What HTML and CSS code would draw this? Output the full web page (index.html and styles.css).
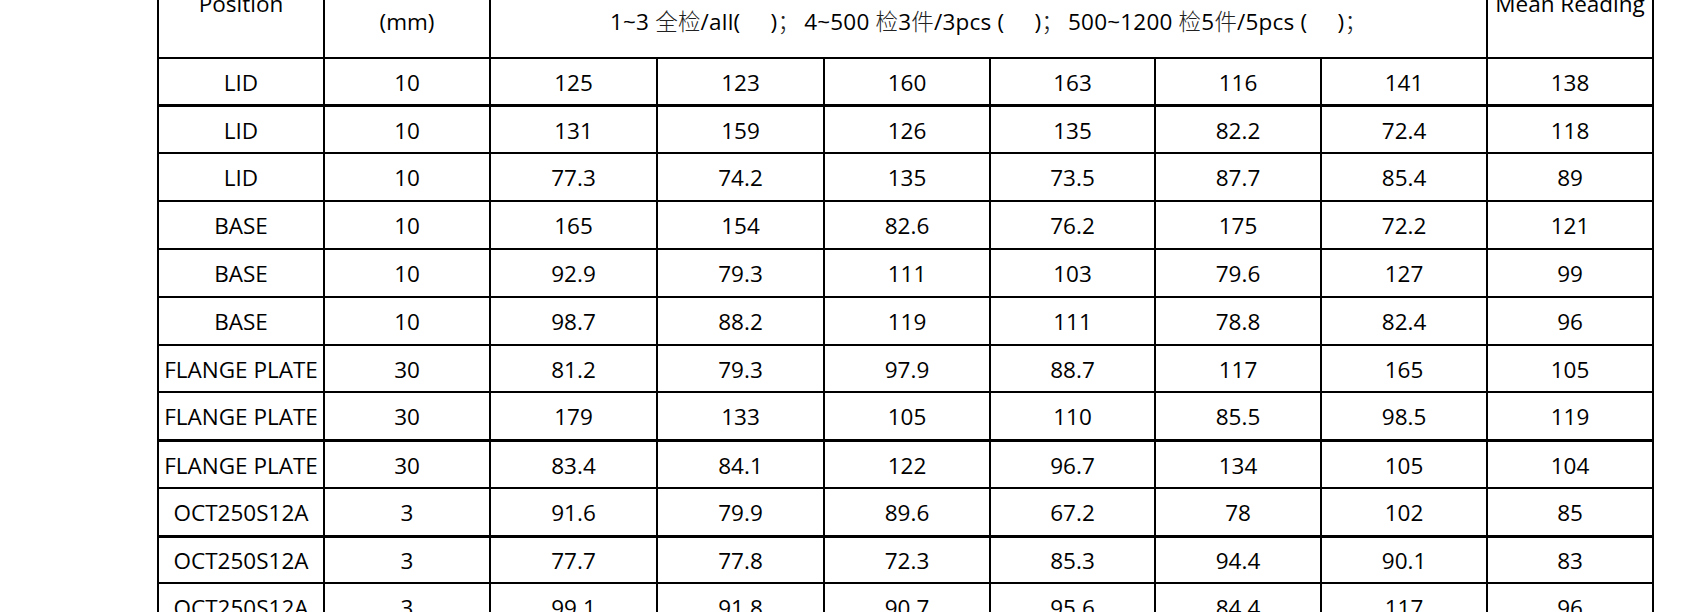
FILE: index.html
```html
<!DOCTYPE html>
<html lang="zh-CN">
<head>
<meta charset="utf-8">
<title>Thickness readings</title>
<link rel="stylesheet" href="styles.css">
</head>
<body>
<div class="sheet">
<table class="grid">
  <colgroup>
    <col class="c1"><col class="c2"><col class="c3"><col class="c4"><col class="c5"><col class="c6"><col class="c7"><col class="c8"><col class="c9">
  </colgroup>
  <thead>
    <tr class="head">
      <th class="hi">Position</th>
      <th class="lo">(mm)</th>
      <th class="lo mid" colspan="6">1~3 <span class="cjk">全检</span>/all(&nbsp;&nbsp;&nbsp;&nbsp;&nbsp;)<span class="cjk">；</span><span class="gap"></span>4~500 <span class="cjk">检</span>3<span class="cjk">件</span>/3pcs (&nbsp;&nbsp;&nbsp;&nbsp;&nbsp;)<span class="cjk">；</span><span class="gap"></span>500~1200 <span class="cjk">检</span>5<span class="cjk">件</span>/5pcs (&nbsp;&nbsp;&nbsp;&nbsp;&nbsp;)<span class="cjk">；</span></th>
      <th class="hi">Mean Reading</th>
    </tr>
  </thead>
  <tbody>
    <tr class="thick"><td>LID</td><td>10</td><td>125</td><td>123</td><td>160</td><td>163</td><td>116</td><td>141</td><td>138</td></tr>
    <tr class="h47"><td>LID</td><td>10</td><td>131</td><td>159</td><td>126</td><td>135</td><td>82.2</td><td>72.4</td><td>118</td></tr>
    <tr><td>LID</td><td>10</td><td>77.3</td><td>74.2</td><td>135</td><td>73.5</td><td>87.7</td><td>85.4</td><td>89</td></tr>
    <tr><td>BASE</td><td>10</td><td>165</td><td>154</td><td>82.6</td><td>76.2</td><td>175</td><td>72.2</td><td>121</td></tr>
    <tr><td>BASE</td><td>10</td><td>92.9</td><td>79.3</td><td>111</td><td>103</td><td>79.6</td><td>127</td><td>99</td></tr>
    <tr><td>BASE</td><td>10</td><td>98.7</td><td>88.2</td><td>119</td><td>111</td><td>78.8</td><td>82.4</td><td>96</td></tr>
    <tr class="h47"><td>FLANGE PLATE</td><td>30</td><td>81.2</td><td>79.3</td><td>97.9</td><td>88.7</td><td>117</td><td>165</td><td>105</td></tr>
    <tr class="h49 thick"><td>FLANGE PLATE</td><td>30</td><td>179</td><td>133</td><td>105</td><td>110</td><td>85.5</td><td>98.5</td><td>119</td></tr>
    <tr class="h47"><td>FLANGE PLATE</td><td>30</td><td>83.4</td><td>84.1</td><td>122</td><td>96.7</td><td>134</td><td>105</td><td>104</td></tr>
    <tr class="h49 thick"><td>OCT250S12A</td><td>3</td><td>91.6</td><td>79.9</td><td>89.6</td><td>67.2</td><td>78</td><td>102</td><td>85</td></tr>
    <tr class="h46"><td>OCT250S12A</td><td>3</td><td>77.7</td><td>77.8</td><td>72.3</td><td>85.3</td><td>94.4</td><td>90.1</td><td>83</td></tr>
    <tr><td>OCT250S12A</td><td>3</td><td>99.1</td><td>91.8</td><td>90.7</td><td>95.6</td><td>84.4</td><td>117</td><td>96</td></tr>
  </tbody>
</table>
</div>
</body>
</html>
```

FILE: styles.css
```css
html, body {
  margin: 0;
  padding: 0;
  background: #ffffff;
  height: 612px;
  overflow: hidden;
}

.sheet {
  padding-left: 157px;
}

.grid {
  margin-top: -40px;
  table-layout: fixed;
  width: 1497px;
  border-collapse: separate;
  border-spacing: 0;
  border-left: 2px solid #000;
  font-family: "Open Sans", "Noto Sans CJK SC", sans-serif;
  font-size: 22.5px;
  font-weight: 500;
  line-height: 31px;
  color: #000;
}

.c1 { width: 166px; }
.c2 { width: 166px; }
.c3 { width: 167px; }
.c4 { width: 167px; }
.c5 { width: 166px; }
.c6 { width: 165px; }
.c7 { width: 166px; }
.c8 { width: 166px; }
.c9 { width: 166px; }

.grid th,
.grid td {
  border-right: 2px solid #000;
  border-bottom: 2px solid #000;
  padding: 0;
  text-align: center;
  white-space: nowrap;
  overflow: hidden;
}

.grid th {
  font-weight: 500;
  vertical-align: bottom;
}

.head {
  height: 99px;
}

.grid th.hi {
  padding-bottom: 38px;
}

.grid th.lo {
  padding-bottom: 20px;
}

.grid th.mid {
  letter-spacing: 0.2px;
}

.grid th.mid .cjk {
  font-family: "Noto Sans CJK SC", sans-serif;
  font-weight: 300;
  color: #222;
}

.grid th.mid .gap {
  display: inline-block;
  width: 4px;
}

.grid td {
  vertical-align: middle;
  padding-top: 1px;
}

.grid tbody tr {
  height: 48px;
}

.grid tbody tr.h46 { height: 46px; }
.grid tbody tr.h47 { height: 47px; }
.grid tbody tr.h49 { height: 49px; }

.grid tr.thick td {
  border-bottom-width: 3px;
}
```
